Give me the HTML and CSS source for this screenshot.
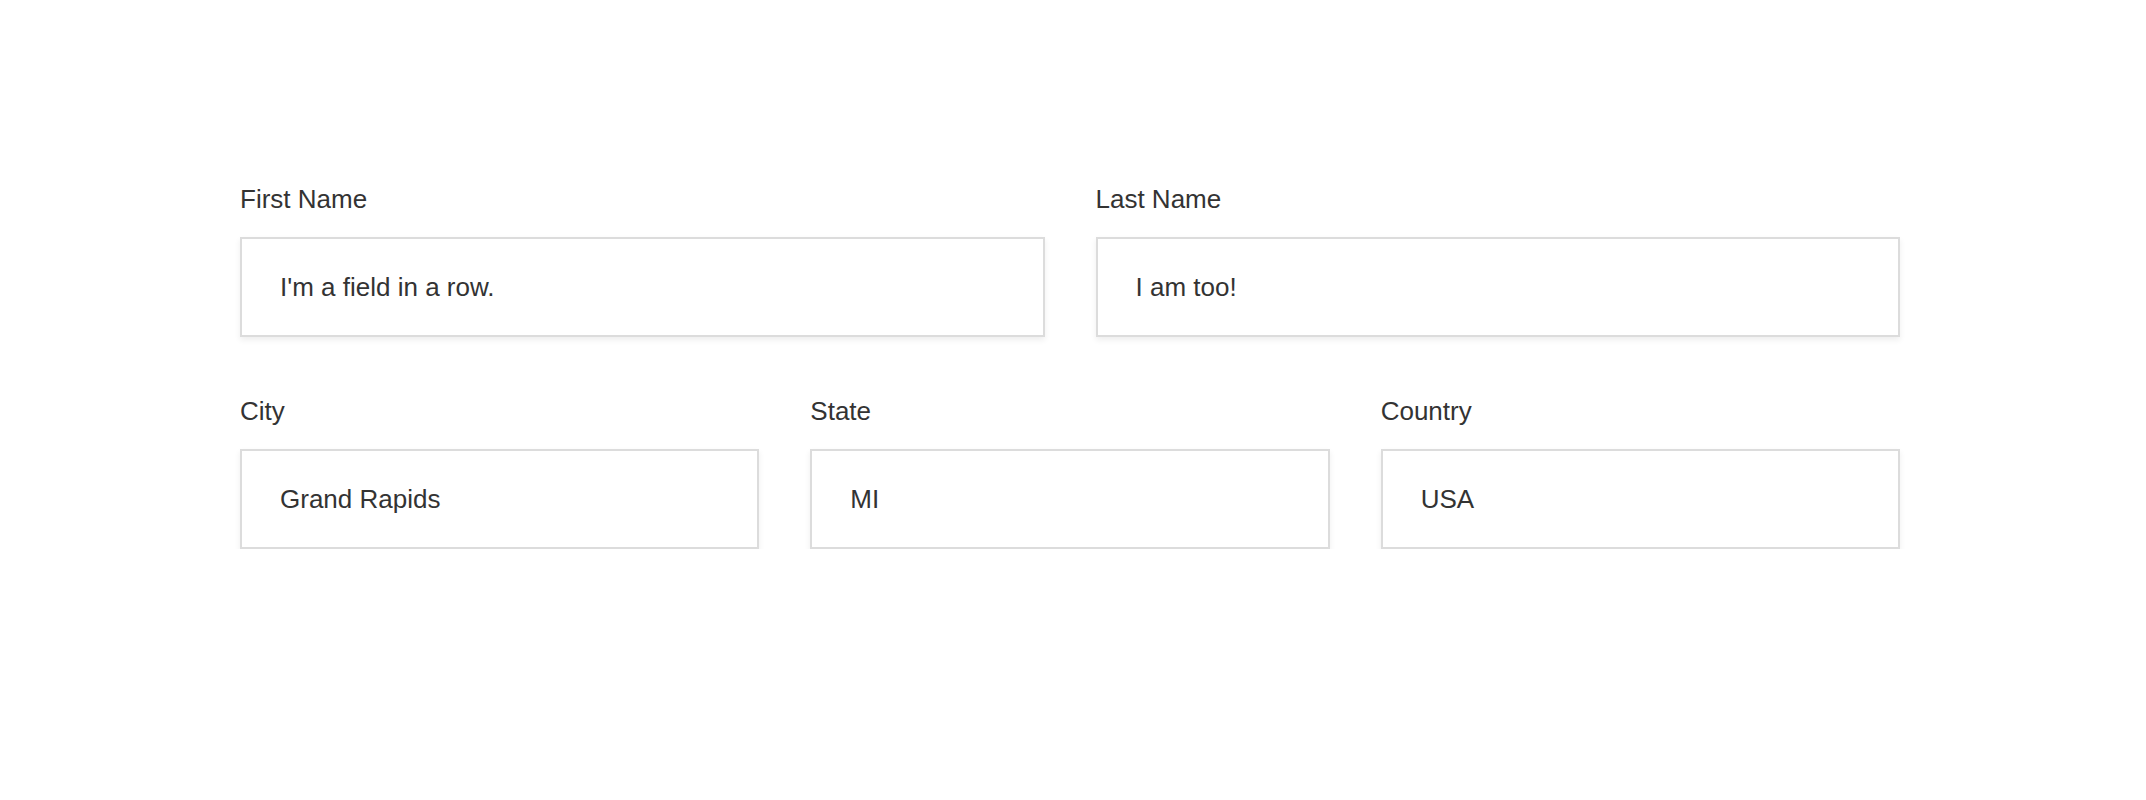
FILE: index.html
```html
<!DOCTYPE html>
<html lang="en">
<head>
<meta charset="utf-8">
<title>Form rows</title>
<link rel="stylesheet" href="styles.css">
</head>
<body>
<form class="form">
  <div class="row row-2">
    <div class="field">
      <label class="label" for="first">First Name</label>
      <input class="input" id="first" type="text" value="I'm a field in a row.">
    </div>
    <div class="field">
      <label class="label" for="last">Last Name</label>
      <input class="input" id="last" type="text" value="I am too!">
    </div>
  </div>
  <div class="row row-3">
    <div class="field">
      <label class="label" for="city">City</label>
      <input class="input" id="city" type="text" value="Grand Rapids">
    </div>
    <div class="field">
      <label class="label" for="state">State</label>
      <input class="input" id="state" type="text" value="MI">
    </div>
    <div class="field">
      <label class="label" for="country">Country</label>
      <input class="input" id="country" type="text" value="USA">
    </div>
  </div>
</form>
</body>
</html>
```

FILE: styles.css
```css
html, body {
  margin: 0;
  padding: 0;
  background: #fff;
}
body {
  font-family: "Liberation Sans", Arial, sans-serif;
  color: #333;
}
.form {
  width: 1660px;
  padding-top: 183px;
  padding-left: 240px;
  display: flex;
  flex-direction: column;
  gap: 58px;
}
.row {
  display: grid;
  column-gap: 51px;
}
.row-2 { grid-template-columns: 1fr 1fr; }
.row-3 { grid-template-columns: 1fr 1fr 1fr; }
.field {
  display: flex;
  flex-direction: column;
  gap: 22px;
}
.label {
  font-size: 26px;
  line-height: 32px;
  color: #333;
}
.input {
  box-sizing: border-box;
  width: 100%;
  height: 100px;
  margin: 0;
  padding: 0 38px;
  border: 2px solid #dcdcdc;
  border-radius: 0;
  background: #fff;
  font-family: inherit;
  font-size: 26px;
  color: #333;
  box-shadow: 0 3px 6px rgba(0, 0, 0, 0.07);
  outline: none;
}
```
